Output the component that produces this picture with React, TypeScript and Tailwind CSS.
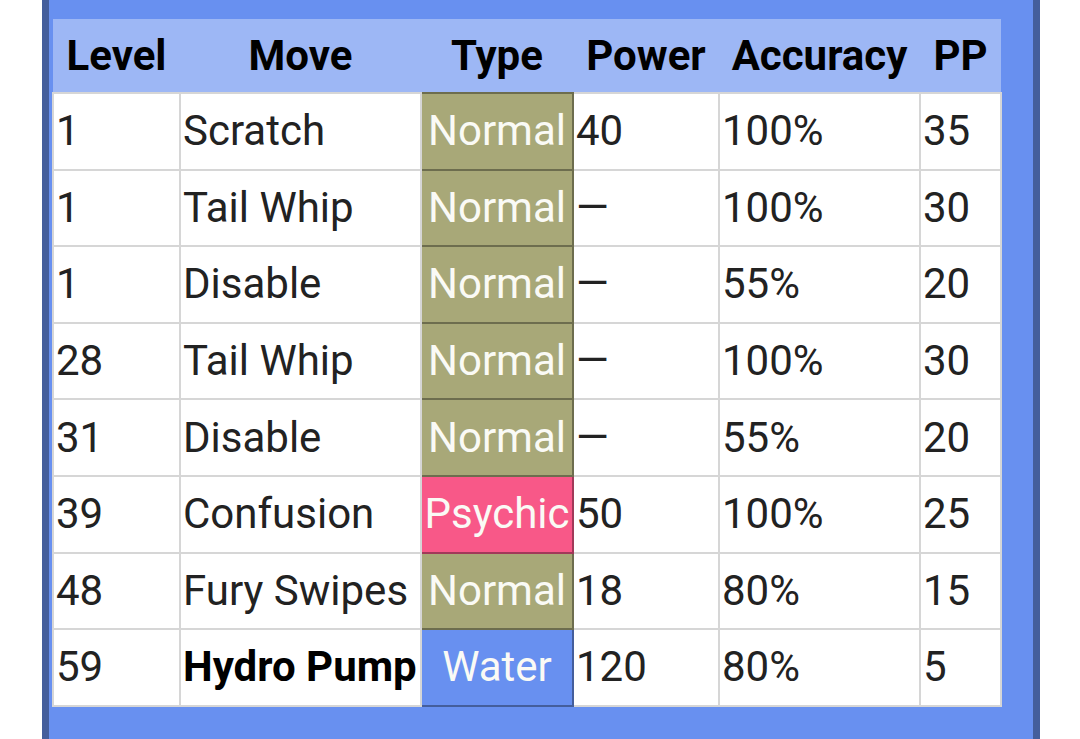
import React from 'react';

type Move = {
  level: string;
  name: string;
  type: 'Normal' | 'Psychic' | 'Water';
  power: string;
  accuracy: string;
  pp: string;
  stab?: boolean;
};

const MOVES: Move[] = [
  { level: '1', name: 'Scratch', type: 'Normal', power: '40', accuracy: '100%', pp: '35' },
  { level: '1', name: 'Tail Whip', type: 'Normal', power: '—', accuracy: '100%', pp: '30' },
  { level: '1', name: 'Disable', type: 'Normal', power: '—', accuracy: '55%', pp: '20' },
  { level: '28', name: 'Tail Whip', type: 'Normal', power: '—', accuracy: '100%', pp: '30' },
  { level: '31', name: 'Disable', type: 'Normal', power: '—', accuracy: '55%', pp: '20' },
  { level: '39', name: 'Confusion', type: 'Psychic', power: '50', accuracy: '100%', pp: '25' },
  { level: '48', name: 'Fury Swipes', type: 'Normal', power: '18', accuracy: '80%', pp: '15' },
  { level: '59', name: 'Hydro Pump', type: 'Water', power: '120', accuracy: '80%', pp: '5', stab: true },
];

const TYPE_STYLE: Record<Move['type'], string> = {
  Normal: 'bg-[#a8a878] border-[#6d6d4e]',
  Psychic: 'bg-[#f85888] border-[#a13959]',
  Water: 'bg-[#6890f0] border-[#445e9c]',
};

const cell = 'border-2 border-[#d6d6d6] bg-white px-[2px] text-left align-middle text-[#222]';

export default function App() {
  return (
    <div className="h-[739px] w-[1080px] overflow-hidden bg-white font-['Roboto',sans-serif]">
      <div className="ml-[42px] h-full w-[998px] border-x-[7px] border-[#445e9c] bg-[#6890f0] pl-[3px] pt-[19px]">
        <table className="w-[948px] table-fixed border-collapse text-[42px] leading-none">
          <colgroup>
            <col className="w-[127px]" />
            <col className="w-[241px]" />
            <col className="w-[152px]" />
            <col className="w-[146px]" />
            <col className="w-[201px]" />
            <col className="w-[81px]" />
          </colgroup>
          <thead>
            <tr className="h-[74px] bg-[#9db7f5] text-black">
              <th className="font-bold">Level</th>
              <th className="font-bold">Move</th>
              <th className="font-bold">Type</th>
              <th className="font-bold">Power</th>
              <th className="font-bold">Accuracy</th>
              <th className="font-bold">PP</th>
            </tr>
          </thead>
          <tbody>
            {MOVES.map((m, i) => (
              <tr key={i} className="h-[76.6px]">
                <td className={cell}>{m.level}</td>
                <td className={`${cell} whitespace-nowrap ${m.stab ? 'font-bold text-black' : ''}`}>{m.name}</td>
                <td className={`border-2 text-center align-middle text-[#fafaf5] whitespace-nowrap ${TYPE_STYLE[m.type]}`}>
                  {m.type}
                </td>
                <td className={cell}>{m.power}</td>
                <td className={cell}>{m.accuracy}</td>
                <td className={cell}>{m.pp}</td>
              </tr>
            ))}
          </tbody>
        </table>
      </div>
    </div>
  );
}
